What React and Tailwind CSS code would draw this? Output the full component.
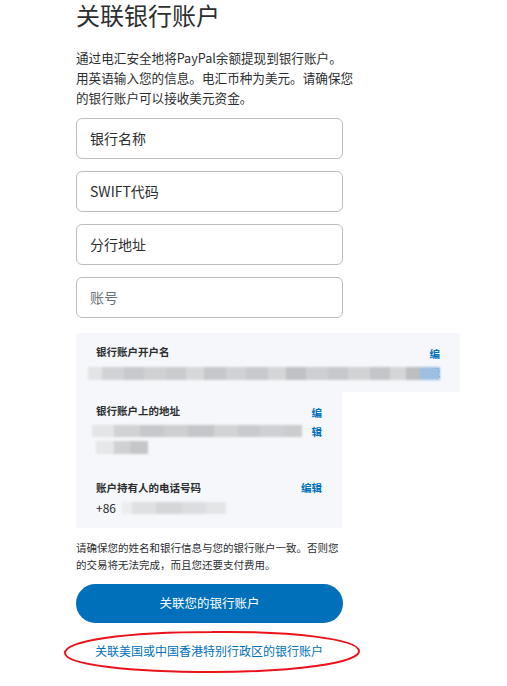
import React from 'react'

const font = { fontFamily: '"Noto Sans CJK SC", "Noto Sans", sans-serif' }

function BlurBar({ cells, className }) {
  return (
    <div className={`flex flex-none blur-[1.2px] ${className}`}>
      {cells.map(([w, c], i) => (
        <div key={i} style={{ width: w, backgroundColor: c }} className="h-full" />
      ))}
    </div>
  )
}

function Field({ label, muted }) {
  return (
    <div className="h-[41px] rounded-[6px] border border-[#b9bdc2] flex items-center px-[13px]">
      <span className={`text-[14px] ${muted ? 'text-[#6c7378]' : 'text-[#2c2e2f]'}`}>{label}</span>
    </div>
  )
}

const nameCells = [
  [14, '#e3e4e6'], [22, '#d2d3d6'], [20, '#c7c9cc'], [22, '#cfd1d3'], [20, '#c9cbce'], [18, '#d6d8da'],
  [22, '#c5c7ca'], [20, '#d0d2d5'], [22, '#c8c9cd'], [18, '#d5d6d8'], [20, '#bfc1c4'], [22, '#cdcfd2'],
  [20, '#c6c8cb'], [22, '#d1d3d5'], [20, '#c3c5c8'], [16, '#d4d6d8'], [14, '#bcbec1'], [20, '#9fbfe2'],
]
const addrCells = [
  [22, '#e4e5e7'], [26, '#d0d2d4'], [24, '#c6c8cb'], [24, '#cdcfd1'], [26, '#c4c6c9'], [24, '#d2d3d5'],
  [22, '#c8cacd'], [24, '#cfd0d3'], [18, '#cbccce'],
]

export default function App() {
  return (
    <div className="relative min-h-[686px] bg-white text-[#2c2e2f]" style={font}>
      <div className="ml-[76px] w-[267px] flex flex-col">
        <h1 className="text-[24px] leading-[32px] -mt-[1px] font-normal text-[#2c2e2f]">关联银行账户</h1>
        <p className="mt-[17px] text-[12.6px] leading-[20px] text-[#2c2e2f] whitespace-nowrap">
          <span className="block">通过电汇安全地将PayPal余额提现到银行账户。</span>
          <span className="block">用英语输入您的信息。电汇币种为美元。请确保您</span>
          <span className="block">的银行账户可以接收美元资金。</span>
        </p>
        <div className="mt-[10px] flex flex-col gap-[12px]">
          <Field label="银行名称" />
          <Field label="SWIFT代码" />
          <Field label="分行地址" />
          <Field label="账号" muted />
        </div>

        <div className="mt-[15px] w-[384px] h-[59px] bg-[#f5f7fa] flex px-[20px] overflow-hidden">
          <div className="flex-1 min-w-0 pt-[11px] flex flex-col">
            <span className="text-[10.5px] leading-[16px] font-bold">银行账户开户名</span>
            <BlurBar cells={nameCells} className="relative z-10 mt-[7px] -ml-[8px] w-[352px] h-[13px]" />
          </div>
          <div className="w-[10.5px] pt-[11px] text-[10.5px] leading-[19px] font-bold text-[#0070ba] break-all">编辑</div>
        </div>
        <div className="w-[266px] bg-[#f5f7fa] pl-[20px] pr-[20px] pb-[12px] flex flex-col">
          <div className="flex pt-[11px]">
            <div className="flex-1 flex flex-col">
              <span className="text-[10.5px] leading-[16px] font-bold">银行账户上的地址</span>
              <BlurBar cells={addrCells} className="mt-[6px] -ml-[4px] h-[12px]" />
              <BlurBar cells={[[18, '#e6e7e9'], [16, '#cfd1d3'], [18, '#c4c6c8']]} className="mt-[4px] h-[13px]" />
            </div>
            <div className="w-[10.5px] text-[10.5px] leading-[19px] font-bold text-[#0070ba] break-all">编辑</div>
          </div>
          <div className="flex mt-[26px]">
            <div className="flex-1 flex flex-col">
              <span className="text-[10.5px] leading-[16px] font-bold">账户持有人的电话号码</span>
              <div className="mt-[4px] flex items-center">
                <span className="text-[12px] leading-[16px]">+86</span>
                <BlurBar cells={[[10, '#ecedef'], [24, '#dfe0e2'], [26, '#d4d6d8'], [24, '#dcdde0'], [20, '#e4e5e7']]} className="ml-[6px] h-[12px]" />
              </div>
            </div>
            <span className="text-[10.5px] leading-[16px] font-bold text-[#0070ba]">编辑</span>
          </div>
        </div>

        <p className="mt-[11px] text-[10.5px] leading-[17px] text-[#2c2e2f] whitespace-nowrap">
          <span className="block">请确保您的姓名和银行信息与您的银行账户一致。否则您</span>
          <span className="block">的交易将无法完成，而且您还要支付费用。</span>
        </p>
        <button className="mt-[11px] h-[39px] rounded-full bg-[#0070ba] text-white text-[12.5px]">关联您的银行账户</button>
        <a className="mt-[20px] ml-[19px] text-[12px] leading-[16px] text-[#0070ba] whitespace-nowrap">关联美国或中国香港特别行政区的银行账户</a>
      </div>

      <svg className="absolute left-[62px] top-[629px]" width="300" height="46" viewBox="0 0 300 46">
        <path
          d="M150 3 C 230 2, 296 10, 297 22 C 298 34, 230 43, 150 43 C 70 43, 3 36, 3 24 C 3 12, 60 3, 152 3"
          fill="none"
          stroke="#e8131b"
          strokeWidth="2"
        />
      </svg>
    </div>
  )
}
